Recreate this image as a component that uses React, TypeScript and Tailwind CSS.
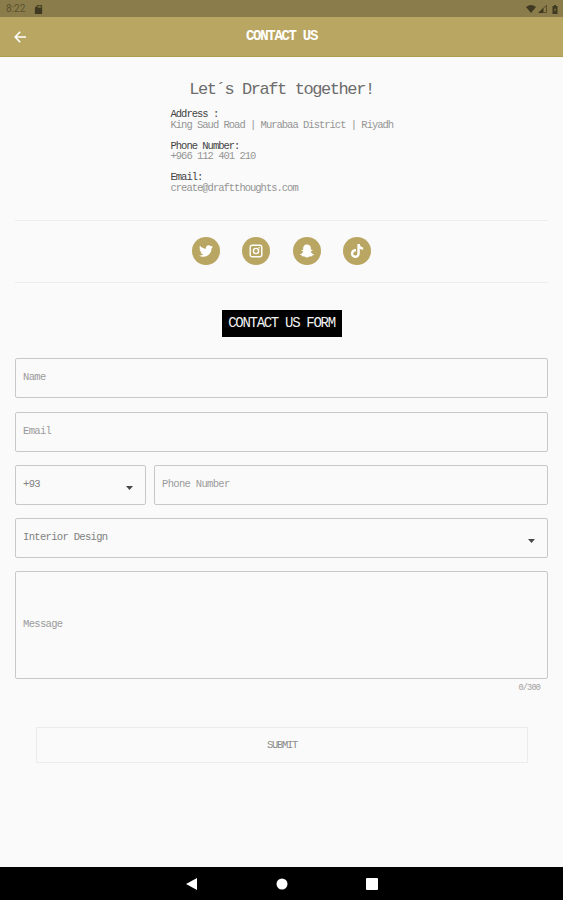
import React from 'react';
import { FaTwitter, FaSnapchatGhost, FaTiktok } from 'react-icons/fa';
import { MdSdCard } from 'react-icons/md';

const contactInfo = [
  { label: 'Address :', value: 'King Saud Road | Murabaa District | Riyadh' },
  { label: 'Phone Number:', value: '+966 112 401 210' },
  { label: 'Email:', value: 'create@draftthoughts.com' },
];

const socials = [
  { name: 'Twitter', icon: FaTwitter },
  { name: 'Instagram', icon: InstagramIcon },
  { name: 'Snapchat', icon: FaSnapchatGhost },
  { name: 'TikTok', icon: FaTiktok },
];

const fieldClass =
  'flex items-center rounded-[2px] border border-[#c8c8c8] px-[7px] text-[10.5px] tracking-[-0.67px] text-[#9a9a9a]';

function InstagramIcon({ className }: { className?: string }) {
  return (
    <svg viewBox="0 0 14 14" className={className} fill="none" stroke="currentColor">
      <rect x="1.2" y="1.2" width="11.6" height="11.6" rx="2" strokeWidth="1.4" />
      <circle cx="7" cy="7" r="2.6" strokeWidth="1.4" />
      <circle cx="10.2" cy="3.8" r=".8" fill="currentColor" stroke="none" />
    </svg>
  );
}

function Caret() {
  return (
    <svg viewBox="0 0 7 4" className="mr-[5px] mt-[5px] h-[4px] w-[7px]" fill="#484848">
      <path d="M0 0H7L3.5 4Z" />
    </svg>
  );
}

function StatusBar() {
  return (
    <div className="flex h-[17px] items-center justify-between bg-[#8b7d4b] pl-[6px] pr-[5px] pt-px text-[#3f3921]">
      <div className="flex items-center gap-[8px]">
        <span className="font-['Roboto','Liberation_Sans',sans-serif] text-[10px] leading-none text-[#5b5130]">8:22</span>
        <MdSdCard className="h-[11px] w-[11px]" />
      </div>
      <div className="flex items-center gap-[2px]">
        <svg viewBox="0 0 10 8" className="h-[8px] w-[10px]" fill="currentColor">
          <path d="M0 2Q5-2 10 2L5 8Z" />
        </svg>
        <svg viewBox="0 0 9 8" className="h-[8px] w-[9px]">
          <path d="M0 8L5.5 2.5V8Z" fill="currentColor" />
          <path d="M5.5 3L8.5.5V7.5H5.5" fill="none" stroke="currentColor" strokeWidth=".7" />
        </svg>
        <svg viewBox="0 0 6 9" className="ml-[3px] h-[9px] w-[6px]">
          <path d="M2 0H4V1H5.5V9H.5V1H2Z" fill="currentColor" />
          <path d="M3.5 2.5L2 5H3L2.6 7.2L4.2 4.5H3.2Z" fill="#8b7d4b" />
        </svg>
      </div>
    </div>
  );
}

function Header() {
  return (
    <header className="grid h-[40px] grid-cols-[1fr_auto_1fr] items-center border-b border-[#b09d4c] bg-[#b9a662] px-[14px] text-white">
      <svg viewBox="0 0 12 12" className="h-[12px] w-[12px]" fill="none" stroke="currentColor" strokeWidth="1.6">
        <path d="M6.2 .8L1.2 6L6.2 11.2M1.2 6H12" />
      </svg>
      <h1 className="pb-[2px] text-[14px] font-bold leading-none tracking-[-1.3px]">CONTACT US</h1>
    </header>
  );
}

export default function App() {
  return (
    <div className="flex h-[900px] w-full flex-col bg-[#fafafa] font-['Liberation_Mono',monospace]">
      <StatusBar />
      <Header />

      <main className="flex flex-1 flex-col px-[15px]">
        <h2 className="mt-[23px] text-center text-[17px] leading-[20px] tracking-[-1.42px] text-[#6c6c6c]">
          Let´s Draft together!
        </h2>

        <div className="mt-[9px] flex flex-col gap-[10.5px] pl-[155.5px] text-[10.5px] leading-[10.5px] tracking-[-1px]">
          {contactInfo.map((item) => (
            <div key={item.label}>
              <p className="text-[#444]">{item.label}</p>
              <p className="text-[#959595]">{item.value}</p>
            </div>
          ))}
        </div>

        <div className="mt-[27px] flex h-[63px] items-center justify-center gap-[22.6px] border-y border-[#ededed] pb-px">
          {socials.map((s) => (
            <a key={s.name} aria-label={s.name} className="flex h-[28px] w-[28px] items-center justify-center rounded-full bg-[#b9a662] text-white">
              <s.icon className="h-[14px] w-[14px]" />
            </a>
          ))}
        </div>

        <div className="mt-[27px] flex h-[27px] w-[120px] items-center justify-center self-center bg-black pb-px text-[14px] tracking-[-1.3px] text-[#f2f2f2]">
          CONTACT US FORM
        </div>

        <form className="mt-[21px] flex flex-col">
          <div className={`${fieldClass} h-[40px]`}>Name</div>
          <div className={`${fieldClass} mt-[14px] h-[40px]`}>Email</div>
          <div className="mt-[13px] flex gap-[8px]">
            <div className={`${fieldClass} h-[40px] w-[131px] justify-between`}>
              <span className="text-[#808080]">+93</span>
              <Caret />
            </div>
            <div className={`${fieldClass} h-[40px] flex-1`}>Phone Number</div>
          </div>
          <div className={`${fieldClass} mt-[13px] h-[40px] justify-between`}>
            <span className="text-[#808080]">Interior Design</span>
            <Caret />
          </div>
          <div className={`${fieldClass} mt-[13px] h-[108px]`}>Message</div>
          <span className="mt-[4px] pr-[8px] text-right text-[8.5px] leading-[10px] tracking-[-0.8px] text-[#a0a0a0]">0/300</span>
          <button type="button" className="ml-[21px] mr-[20px] mt-[34px] h-[36px] border border-[#ececec] pt-px text-[10.5px] tracking-[-1.3px] text-[#8c8c8c]">
            SUBMIT
          </button>
        </form>
      </main>

      <nav className="flex h-[33px] items-center justify-center bg-black">
        <svg viewBox="0 0 192 14" className="h-[14px] w-[192px]" fill="white">
          <path d="M0 7L11 1V13Z" />
          <circle cx="96" cy="7" r="5.5" />
          <rect x="180" y="1" width="12" height="12" rx="1" />
        </svg>
      </nav>
    </div>
  );
}
